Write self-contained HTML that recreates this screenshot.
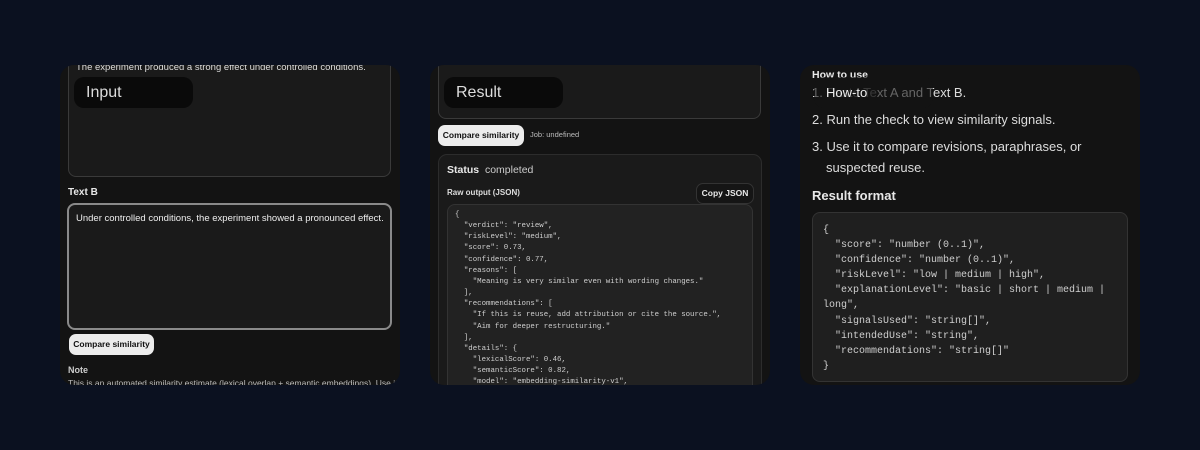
<!DOCTYPE html>
<html><head><meta charset="utf-8"><style>
*{box-sizing:border-box;margin:0;padding:0}
body{width:1200px;height:450px;background:#0b1120;font-family:"Liberation Sans",sans-serif;color:#e8e8e8;position:relative;overflow:hidden}
.p{position:absolute;top:65px;width:340px;height:320px;background:#131313;border-radius:14px;overflow:hidden}
.a{position:absolute}
.badge{position:absolute;left:14px;top:12px;width:119px;height:31px;background:#0a0a0a;border-radius:10px;font-size:16px;color:#ddd;padding:7px 0 0 12px}
.btn{position:absolute;background:#ececec;color:#111;border-radius:7px;font-size:8.5px;font-weight:bold;text-align:center;line-height:21px}
pre{font-family:"Liberation Mono",monospace;color:#cfcfcf}
</style></head><body>
<div class="p" style="left:60px">
 <div class="a" style="left:8px;top:-10px;width:323px;height:122px;border:1px solid #3a3a3a;border-radius:8px;background:#1a1a1a"></div>
 <div class="a" style="left:16px;top:-3px;font-size:9.5px;color:#ddd">The experiment produced a strong effect under controlled conditions.</div>
 <div class="badge">Input</div>
 <div class="a" style="left:8px;top:122px;font-size:10px;font-weight:bold">Text B</div>
 <div class="a" style="left:7px;top:138px;width:325px;height:127px;border:2px solid #8a8a8a;border-radius:8px;background:#1a1a1a"></div>
 <div class="a" style="left:16px;top:148px;font-size:9.5px;color:#eee">Under controlled conditions, the experiment showed a pronounced effect.</div>
 <div class="btn" style="left:9px;top:269px;width:85px">Compare similarity</div>
 <div class="a" style="left:8px;top:300px;font-size:9px;font-weight:bold;color:#ccc">Note</div>
 <div class="a" style="left:8px;top:313px;font-size:8.5px;color:#bbb;white-space:nowrap">This is an automated similarity estimate (lexical overlap + semantic embeddings). Use it</div>
</div>
<div class="p" style="left:430px">
 <div class="a" style="left:8px;top:-10px;width:323px;height:64px;border:1px solid #3a3a3a;border-radius:8px;background:#1a1a1a"></div>
 <div class="badge">Result</div>
 <div class="btn" style="left:8px;top:60px;width:86px">Compare similarity</div>
 <div class="a" style="left:100px;top:65px;font-size:7.5px;color:#bbb">Job: undefined</div>
 <div class="a" style="left:8px;top:89px;width:324px;height:300px;border:1px solid #2c2c2c;border-radius:9px;background:#1a1a1a">
  <div class="a" style="left:8px;top:9px;font-size:10.5px;white-space:nowrap"><b>Status</b>&nbsp; <span style="color:#ccc">completed</span></div>
  <div class="a" style="left:8px;top:33px;font-size:8px;font-weight:bold;color:#ddd">Raw output (JSON)</div>
  <div class="a" style="left:257px;top:28px;width:58px;height:21px;border:1px solid #333;border-radius:7px;background:#151515;font-size:8.5px;font-weight:bold;text-align:center;line-height:19px">Copy JSON</div>
  <div class="a" style="left:8px;top:49px;width:306px;height:240px;border:1px solid #333;border-radius:8px;background:#222">
<pre style="position:absolute;left:7px;top:5px;font-size:7.4px;line-height:11.15px">{
  "verdict": "review",
  "riskLevel": "medium",
  "score": 0.73,
  "confidence": 0.77,
  "reasons": [
    "Meaning is very similar even with wording changes."
  ],
  "recommendations": [
    "If this is reuse, add attribution or cite the source.",
    "Aim for deeper restructuring."
  ],
  "details": {
    "lexicalScore": 0.46,
    "semanticScore": 0.82,
    "model": "embedding-similarity-v1",</pre>
  </div>
 </div>
</div>
<div class="p" style="left:800px">
 <div class="a" style="left:12px;top:4px;font-size:10.5px;font-weight:bold">How to use</div>
 <div class="a" style="left:12px;top:15px;font-size:13px;line-height:26px;color:#ddd">1. <span style="opacity:.45">Paste Te</span>xt A and Text B.</div>
 <div class="badge" style="background:rgba(20,20,20,0.6);left:14px;top:12px;color:#eee;font-size:13px;padding-top:8px">How-to</div>
 <div class="a" style="left:12px;top:42px;font-size:13px;line-height:26px;color:#ddd">2. Run the check to view similarity signals.</div>
 <div class="a" style="left:12px;top:71px;font-size:13px;line-height:21px;color:#ddd">3. Use it to compare revisions, paraphrases, or<br><span style="padding-left:14px">suspected reuse.</span></div>
 <div class="a" style="left:12px;top:123px;font-size:13px;font-weight:bold">Result format</div>
 <div class="a" style="left:12px;top:147px;width:316px;height:170px;border:1px solid #333;border-radius:8px;background:#1f1f1f">
<pre style="position:absolute;left:10px;top:10px;font-size:10px;line-height:15.1px">{
  "score": "number (0..1)",
  "confidence": "number (0..1)",
  "riskLevel": "low | medium | high",
  "explanationLevel": "basic | short | medium |
long",
  "signalsUsed": "string[]",
  "intendedUse": "string",
  "recommendations": "string[]"
}</pre>
 </div>
</div>
</body></html>
